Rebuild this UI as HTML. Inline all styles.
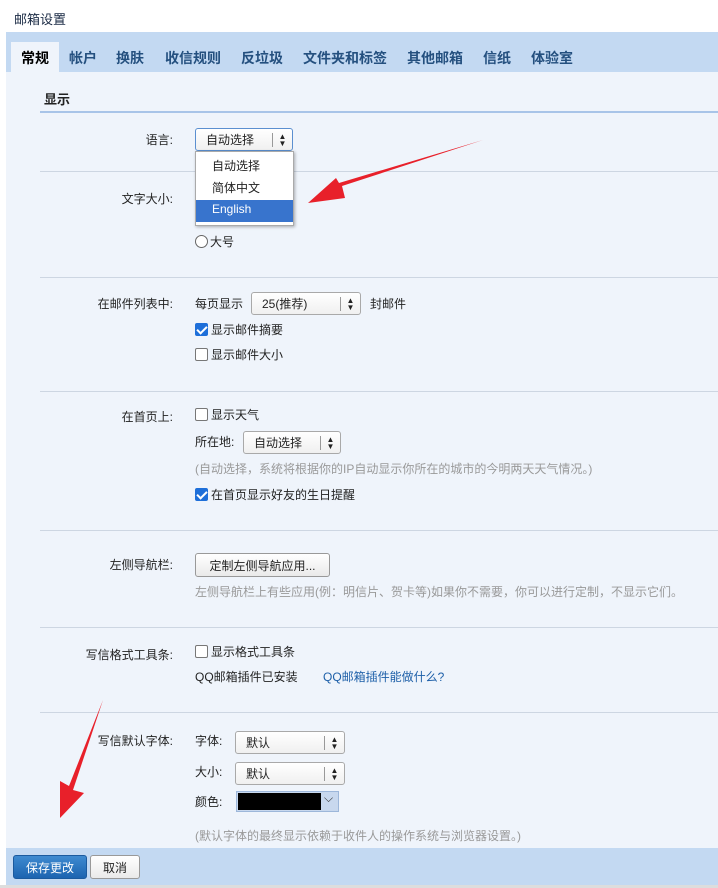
<!DOCTYPE html><html><head><meta charset="utf-8"><style>
*{margin:0;padding:0;box-sizing:border-box}
html,body{width:718px;height:888px;overflow:hidden}
body{background:#fff;font:12px "Liberation Sans","Noto Sans CJK SC",sans-serif;color:#222;position:relative}
.a{position:absolute;white-space:nowrap}
.sel{position:absolute;height:23px;border:1px solid #a9a9a9;border-radius:3px;background:linear-gradient(#fff,#f0f0f0);padding:2px 0 0 10px;font-size:12px}
.sel i{position:absolute;right:0;top:4px;width:20px;height:14px;border-left:1px solid #999;font-style:normal;font-size:8px;text-align:center;line-height:7px}
.ln{position:absolute;left:40px;right:0;height:1px;background:#cdd6e2}
.cb{display:inline-block;width:13px;height:13px;border:1px solid #777;border-radius:2px;background:#fff;vertical-align:-2px;margin-right:3px}
.cb.on{background:#1e6fd9;border-color:#1e6fd9;position:relative}
.cb.on:after{content:"";position:absolute;left:3px;top:0px;width:4px;height:8px;border:solid #fff;border-width:0 2px 2px 0;transform:rotate(45deg)}
.lab{position:absolute;right:545px;text-align:right;white-space:nowrap}
.g{color:#999}
.tab{position:absolute;top:48px;font-weight:bold;color:#24507f;font-size:14px}
.btn{position:absolute;border:1px solid #999;border-radius:3px;background:linear-gradient(#fff,#eaeaea);text-align:center}
</style></head><body>
<div class="a" style="left:14px;top:9px;font-size:13px;color:#1a2a44">邮箱设置</div>
<div class="a" style="left:6px;top:32px;right:0;height:40px;background:#c3d9f2"></div>
<div class="a" style="left:11px;top:42px;width:48px;height:31px;background:#eff4fb"></div>
<div class="a" style="left:6px;top:72px;right:0;height:776px;background:#eff4fb"></div>
<div class="tab" style="left:21px;color:#000">常规</div>
<div class="tab" style="left:69px">帐户</div>
<div class="tab" style="left:116px">换肤</div>
<div class="tab" style="left:165px">收信规则</div>
<div class="tab" style="left:241px">反垃圾</div>
<div class="tab" style="left:303px">文件夹和标签</div>
<div class="tab" style="left:407px">其他邮箱</div>
<div class="tab" style="left:483px">信纸</div>
<div class="tab" style="left:531px">体验室</div>
<div class="a" style="left:44px;top:89px;font-weight:bold;font-size:13px">显示</div>
<div class="a" style="left:40px;top:111px;right:0;height:2px;background:#a8c4e8"></div>
<div class="ln" style="top:171px"></div><div class="ln" style="top:277px"></div><div class="ln" style="top:391px"></div><div class="ln" style="top:530px"></div><div class="ln" style="top:627px"></div><div class="ln" style="top:712px"></div>

<div class="lab" style="top:131px">语言:</div>
<div class="sel" style="left:195px;top:128px;width:98px;border-color:#5b8fd0">自动选择<i>▲<br>▼</i></div>
<div class="a" style="left:195px;top:151px;width:99px;height:75px;background:#fff;border:1px solid #aaa;box-shadow:1px 1px 3px rgba(0,0,0,.3)"></div>
<div class="a" style="left:212px;top:157px">自动选择</div>
<div class="a" style="left:212px;top:179px">简体中文</div>
<div class="a" style="left:196px;top:200px;width:97px;height:22px;background:#3874cd"></div>
<div class="a" style="left:212px;top:202px;color:#fff">English</div>
<div class="lab" style="top:190px">文字大小:</div>
<div class="a" style="left:195px;top:233px"><span style="display:inline-block;width:13px;height:13px;border:1px solid #666;border-radius:50%;background:#fff;vertical-align:-2px;margin-right:2px"></span>大号</div>

<div class="lab" style="top:295px">在邮件列表中:</div>
<div class="a" style="left:195px;top:295px">每页显示</div>
<div class="sel" style="left:251px;top:292px;width:110px">25(推荐)<i>▲<br>▼</i></div>
<div class="a" style="left:370px;top:295px">封邮件</div>
<div class="a" style="left:195px;top:321px"><span class="cb on"></span>显示邮件摘要</div>
<div class="a" style="left:195px;top:346px"><span class="cb"></span>显示邮件大小</div>

<div class="lab" style="top:408px">在首页上:</div>
<div class="a" style="left:195px;top:406px"><span class="cb"></span>显示天气</div>
<div class="a" style="left:195px;top:433px">所在地:</div>
<div class="sel" style="left:243px;top:431px;width:98px">自动选择<i>▲<br>▼</i></div>
<div class="a g" style="left:195px;top:460px">(自动选择，系统将根据你的IP自动显示你所在的城市的今明两天天气情况。)</div>
<div class="a" style="left:195px;top:486px"><span class="cb on"></span>在首页显示好友的生日提醒</div>

<div class="lab" style="top:556px">左侧导航栏:</div>
<div class="btn" style="left:195px;top:553px;width:135px;height:24px;padding-top:3px">定制左侧导航应用...</div>
<div class="a g" style="left:195px;top:583px">左侧导航栏上有些应用(例：明信片、贺卡等)如果你不需要，你可以进行定制，不显示它们。</div>

<div class="lab" style="top:646px">写信格式工具条:</div>
<div class="a" style="left:195px;top:643px"><span class="cb"></span>显示格式工具条</div>
<div class="a" style="left:195px;top:668px">QQ邮箱插件已安装</div>
<div class="a" style="left:323px;top:668px;color:#1d5fa8">QQ邮箱插件能做什么?</div>

<div class="lab" style="top:732px">写信默认字体:</div>
<div class="a" style="left:195px;top:732px">字体:</div>
<div class="sel" style="left:235px;top:731px;width:110px">默认<i>▲<br>▼</i></div>
<div class="a" style="left:195px;top:763px">大小:</div>
<div class="sel" style="left:235px;top:762px;width:110px">默认<i>▲<br>▼</i></div>
<div class="a" style="left:195px;top:793px">颜色:</div>
<div class="a" style="left:236px;top:791px;width:103px;height:21px;background:#c8d8ee;border:1px solid #9db7da"></div>
<div class="a" style="left:238px;top:793px;width:83px;height:17px;background:#000"></div>
<div class="a" style="left:324px;top:791px;font-size:12px;color:#333">⌵</div>
<div class="a g" style="left:195px;top:827px">(默认字体的最终显示依赖于收件人的操作系统与浏览器设置。)</div>

<div class="a" style="left:6px;top:848px;right:0;height:37px;background:#c3d9f2"></div>
<div class="a" style="left:0;top:885px;width:718px;height:3px;background:#ddd"></div>
<div class="btn" style="left:13px;top:855px;width:74px;height:24px;padding-top:3px;background:linear-gradient(#3e8ad0,#1c64b0);border-color:#1b5a9e;color:#fff">保存更改</div>
<div class="btn" style="left:90px;top:855px;width:50px;height:24px;padding-top:3px">取消</div>

<svg class="a" style="left:0;top:0" width="718" height="888">
<polygon points="483,140 342,186 345,198 308,203 336,178 339,183" fill="#e8202a"/>
<polygon points="103,700 73,790 84,793 60,818 60,781 69,786" fill="#e8202a"/>
</svg>
</body></html>
